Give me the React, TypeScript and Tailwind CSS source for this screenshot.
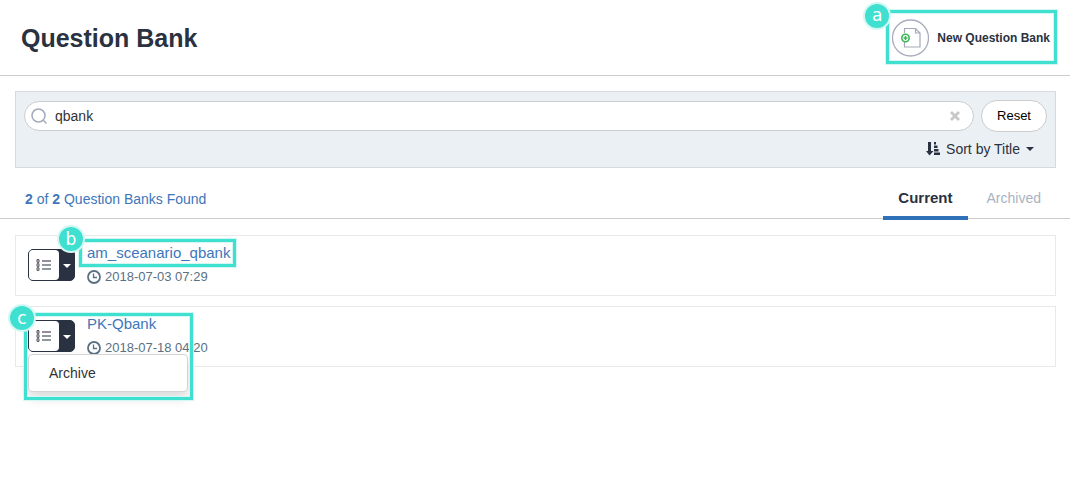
import React from "react";

type CalloutProps = { letter: string; className: string; badge: string };

function Callout({ letter, className, badge }: CalloutProps) {
  return (
    <span
      className={`pointer-events-none absolute z-20 border-3 border-[#40e0d0] shadow-[0_0_0_1px_#d3f8f4,inset_0_0_0_1px_#d3f8f4] ${className}`}
    >
      <span
        className={`absolute flex size-7 items-center justify-center rounded-full border-2 border-[#d3f8f4] bg-[#40e0d0] font-['DejaVu_Sans',sans-serif] text-[17px] leading-none text-white ${badge}`}
      >
        {letter}
      </span>
    </span>
  );
}

function Caret({ className }: { className: string }) {
  return (
    <svg viewBox="0 0 8 4" className={`h-1 w-2 ${className}`} fill="currentColor" aria-hidden="true">
      <path d="M0 0h8L4 4z" />
    </svg>
  );
}

function NewBankIcon() {
  return (
    <svg viewBox="0 0 38 38" className="size-[38px]" fill="none" aria-hidden="true">
      <circle cx="19.500" cy="19" r="18" stroke="#a9adbd" strokeWidth="1.3" />
      <path d="M13.500 14v-4.500h11l4.500 4.500v14h-15.500v-5M24.500 9.500v4.500h4.500" stroke="#a3a8bb" strokeWidth="1.2" />
      <circle cx="14.500" cy="19" r="3.700" fill="#fff" stroke="#3cb556" strokeWidth="1.6" />
      <path d="M12.500 19h4M14.500 17v4" stroke="#3cb556" strokeWidth="1.5" />
    </svg>
  );
}

function ListIcon() {
  return (
    <svg viewBox="0 0 16 12" className="h-3 w-4" fill="none" aria-hidden="true">
      <path d="M6 2h9" stroke="#8b7f92" strokeWidth="1.8" />
      <path d="M6 6h9M6 10h9" stroke="#8f989d" strokeWidth="1.8" />
      <g stroke="#55515f" strokeWidth="1.1">
        <rect x="1" y="0.500" width="2" height="3" rx="1" />
        <rect x="1" y="4.500" width="2" height="3" rx="1" />
        <rect x="1" y="8.500" width="2" height="3" rx="1" />
      </g>
    </svg>
  );
}

function ClockIcon() {
  return (
    <svg viewBox="0 0 14 14" className="size-[14px]" fill="none" stroke="#5a7184" aria-hidden="true">
      <circle cx="7" cy="7" r="6" strokeWidth="1.8" />
      <path d="M6.500 3.500v4h3.500" strokeWidth="1.3" />
    </svg>
  );
}

type Bank = { title: string; date: string; highlighted?: boolean; open?: boolean };

const banks: Bank[] = [
  { title: "am_sceanario_qbank", date: "2018-07-03 07:29", highlighted: true },
  { title: "PK-Qbank", date: "2018-07-18 04:20", open: true },
];

function BankRow({ bank }: { bank: Bank }) {
  return (
    <li className="flex h-[61px] items-start gap-3 border border-[#e9e9e9] px-3 pt-[9px]">
      <div className="relative mt-1 flex h-8 w-[47px] shrink-0 rounded-[5px] border border-[#2a3140] bg-[#2a3140]">
        <button
          type="button"
          aria-label={`Open ${bank.title}`}
          className="flex w-[30px] items-center justify-center rounded-[4px] bg-white"
        >
          <ListIcon />
        </button>
        <button
          type="button"
          aria-label={`Actions for ${bank.title}`}
          aria-expanded={!!bank.open}
          className="flex flex-1 items-center justify-center text-white"
        >
          <Caret className="mt-0.5" />
        </button>
        {bank.open && (
          <>
            <div
              role="menu"
              className="absolute top-[33px] -left-px z-10 w-40 rounded-[4px] border border-[#d4d4d4] bg-white shadow-[0_6px_12px_rgba(0,0,0,0.15)]"
            >
              <button type="button" role="menuitem" className="block w-full px-5 py-2 text-left text-sm text-[#333]">
                Archive
              </button>
            </div>
            <Callout letter="c" className="-top-2 -left-[5px] h-[87px] w-[169px]" badge="-top-3 -left-[19px]" />
          </>
        )}
      </div>
      <div className="flex flex-col items-start gap-1.5">
        <div className="relative">
          <a href="#bank" className="block text-[15px] leading-4 text-[#3d76ba]">
            {bank.title}
          </a>
          {bank.highlighted && (
            <Callout letter="b" className="-top-1.5 -right-1.5 -bottom-1.5 -left-2" badge="-top-[17px] -left-[25px]" />
          )}
        </div>
        <div className="flex items-center gap-1 text-[13px] leading-5 text-[#5a7184]">
          <ClockIcon />
          <time>{bank.date}</time>
        </div>
      </div>
    </li>
  );
}

export default function App() {
  return (
    <div className="min-h-screen bg-white font-['Liberation_Sans',Arial,sans-serif] text-[#2a3140]">
      <header className="flex h-[76px] items-center justify-between border-b border-[#ccc] pr-5 pl-[21px]">
        <h1 className="pt-0.5 text-[25px] font-bold">Question Bank</h1>
        <div className="relative">
          <button type="button" className="flex items-center gap-2 text-xs font-bold">
            <NewBankIcon />
            New Question Bank
          </button>
          <Callout letter="a" className="-top-[9px] -right-[7px] -bottom-[7px] -left-[5px]" badge="-top-[11px] -left-[26px]" />
        </div>
      </header>

      <form
        className="mt-[15px] mr-[14px] ml-[15px] border border-[#d6dade] bg-[#ebf0f4] p-2"
        onSubmit={(e: React.FormEvent) => e.preventDefault()}
      >
        <div className="flex items-center gap-[7px]">
          <div className="flex h-[30px] flex-1 items-center gap-2 rounded-full border border-[#ccc] bg-white pr-3 pl-1.5">
            <svg viewBox="0 0 16 16" className="size-4 shrink-0" fill="none" stroke="#a2aabd" strokeWidth="1.5" aria-hidden="true">
              <circle cx="7.500" cy="7.500" r="6.500" />
              <path d="M12.300 12.300l3.200 3.200" />
            </svg>
            <input
              type="text"
              aria-label="Search question banks"
              defaultValue="qbank"
              className="min-w-0 flex-1 bg-transparent text-sm text-[#333] outline-none"
            />
            <button type="button" aria-label="Clear search" className="flex size-3 items-center justify-center">
              <svg viewBox="0 0 10 10" className="size-[10px]" stroke="#c8c8c8" strokeWidth="2.8" aria-hidden="true">
                <path d="M1 1l8 8M9 1l-8 8" />
              </svg>
            </button>
          </div>
          <button type="reset" className="h-8 w-[66px] rounded-full border border-[#ccc] bg-white text-[13px] text-black">
            Reset
          </button>
        </div>
        <div className="mt-[7px] flex justify-end pr-[13px]">
          <button type="button" className="flex items-center text-sm text-[#2a3140]">
            <svg viewBox="0 0 14 14" className="mr-1.5 size-[14px]" fill="currentColor" aria-hidden="true">
              <path d="M2 0h3v9h2.500L3.500 13.500 0 9h2zM8 0h2v2.500H8zM8 3.500h3.500V6H8zM8 7h4.500v2.500H8zM8 10.500h6V13H8z" />
            </svg>
            Sort by Title
            <Caret className="ml-1.5" />
          </button>
        </div>
      </form>

      <div className="flex h-[51px] items-end justify-between border-b border-[#ccc] pr-[14px] pl-[25px]">
        <p className="pb-[9px] text-sm text-[#3d76ba]">
          <b>2</b> of <b>2</b> Question Banks Found
        </p>
        <div role="tablist" className="-mb-0.5 flex items-end">
          <button
            type="button"
            role="tab"
            aria-selected="true"
            className="border-b-4 border-[#3072ba] px-[15px] pb-2 text-[15px] leading-5 font-bold"
          >
            Current
          </button>
          <button
            type="button"
            role="tab"
            aria-selected="false"
            className="border-b-4 border-transparent pr-[15px] pb-2 pl-[19px] text-sm leading-5 text-[#a9b3bf]"
          >
            Archived
          </button>
        </div>
      </div>

      <ul className="mt-4 mr-[14px] ml-[15px] flex flex-col gap-[10px]">
        {banks.map((bank) => (
          <BankRow key={bank.title} bank={bank} />
        ))}
      </ul>
    </div>
  );
}
